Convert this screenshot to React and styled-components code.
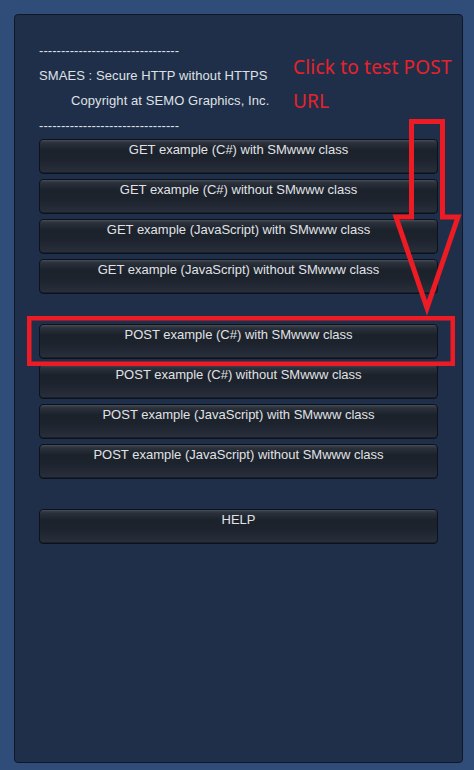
import React from "react";
import styled, { createGlobalStyle } from "styled-components";

const Global = createGlobalStyle`
  html, body { margin: 0; padding: 0; background: #304c79; }
  body { font-family: "Liberation Sans", Arial, sans-serif; }
`;

const Page = styled.div`
  position: relative;
  width: 474px;
  height: 770px;
  box-sizing: border-box;
  padding: 14px 11px 7px 14px;
  background: #304c79;
  overflow: hidden;
`;

const Panel = styled.div`
  box-sizing: border-box;
  height: 749px;
  background: #1f2f4a;
  border: 1px solid #0f1828;
  border-radius: 4px;
  padding: 23px 24px 0 24px;
  display: flex;
  flex-direction: column;
`;

const InfoLine = styled.div`
  font-size: 13px;
  line-height: 25px;
  height: 25px;
  color: #dfe1e4;
  white-space: nowrap;
  padding-left: ${(p) => (p.$indent ? "32px" : "0")};
  letter-spacing: ${(p) => (p.$dash ? "0.05px" : "0.08px")};
`;

const Header = styled.div`
  display: flex;
  flex-direction: column;
  margin-bottom: 1px;
`;

const Group = styled.div`
  display: flex;
  flex-direction: column;
  gap: 5px;
  margin-top: ${(p) => p.$gap || 0}px;
`;

const Button = styled.button`
  box-sizing: border-box;
  width: 399px;
  height: 35px;
  margin: 0;
  padding: 2px 0 0 0;
  display: flex;
  align-items: flex-start;
  justify-content: center;
  text-align: center;
  font-family: "Liberation Sans", Arial, sans-serif;
  font-size: 13px;
  line-height: 15px;
  color: #e0e2e6;
  border: 1px solid #0c121b;
  border-radius: 4px;
  background: linear-gradient(
    to bottom,
    #4c525c 0px,
    #3a404a 1px,
    #2b313b 3px,
    #1c222b 10px,
    #1d232d 18px,
    #262c38 30px,
    #2a303c 33px
  );
  box-shadow: inset 0 -1px 0 #1a202a;
  cursor: pointer;
`;

const Note = styled.div`
  position: absolute;
  left: 293px;
  top: 50px;
  font-family: "Noto Sans", "Noto Sans CJK KR", sans-serif;
  font-size: 19px;
  letter-spacing: 0.2px;
  line-height: 34px;
  color: #e8222a;
  white-space: nowrap;
`;

const Overlay = styled.svg`
  position: absolute;
  left: 0;
  top: 0;
  pointer-events: none;
`;

const dashes = "--------------------------------";

const getButtons = [
  "GET example (C#) with SMwww class",
  "GET example (C#) without SMwww class",
  "GET example (JavaScript) with SMwww class",
  "GET example (JavaScript) without SMwww class",
];

const postButtons = [
  "POST example (C#) with SMwww class",
  "POST example (C#) without SMwww class",
  "POST example (JavaScript) with SMwww class",
  "POST example (JavaScript) without SMwww class",
];

export default function App() {
  return (
    <>
      <Global />
      <Page>
        <Panel>
          <Header>
            <InfoLine $dash>{dashes}</InfoLine>
            <InfoLine>SMAES : Secure HTTP without HTTPS</InfoLine>
            <InfoLine $indent>Copyright at SEMO Graphics, Inc.</InfoLine>
            <InfoLine $dash>{dashes}</InfoLine>
          </Header>
          <Group>
            {getButtons.map((t) => (
              <Button key={t}>{t}</Button>
            ))}
          </Group>
          <Group $gap={30}>
            {postButtons.map((t) => (
              <Button key={t}>{t}</Button>
            ))}
          </Group>
          <Group $gap={30}>
            <Button>HELP</Button>
          </Group>
        </Panel>
        <Note>
          Click to test POST
          <br />
          URL
        </Note>
        <Overlay width="474" height="770" viewBox="0 0 474 770">
          <polygon
            points="411.5,121.5 442.5,121.5 442.5,217 458,217 427,308 396,217 411.5,217"
            fill="none"
            stroke="#ed1c24"
            strokeWidth="5"
            strokeLinejoin="miter"
          />
          <rect
            x="29.25"
            y="318.25"
            width="423.5"
            height="45.5"
            fill="none"
            stroke="#ed1c24"
            strokeWidth="4.5"
          />
        </Overlay>
      </Page>
    </>
  );
}
